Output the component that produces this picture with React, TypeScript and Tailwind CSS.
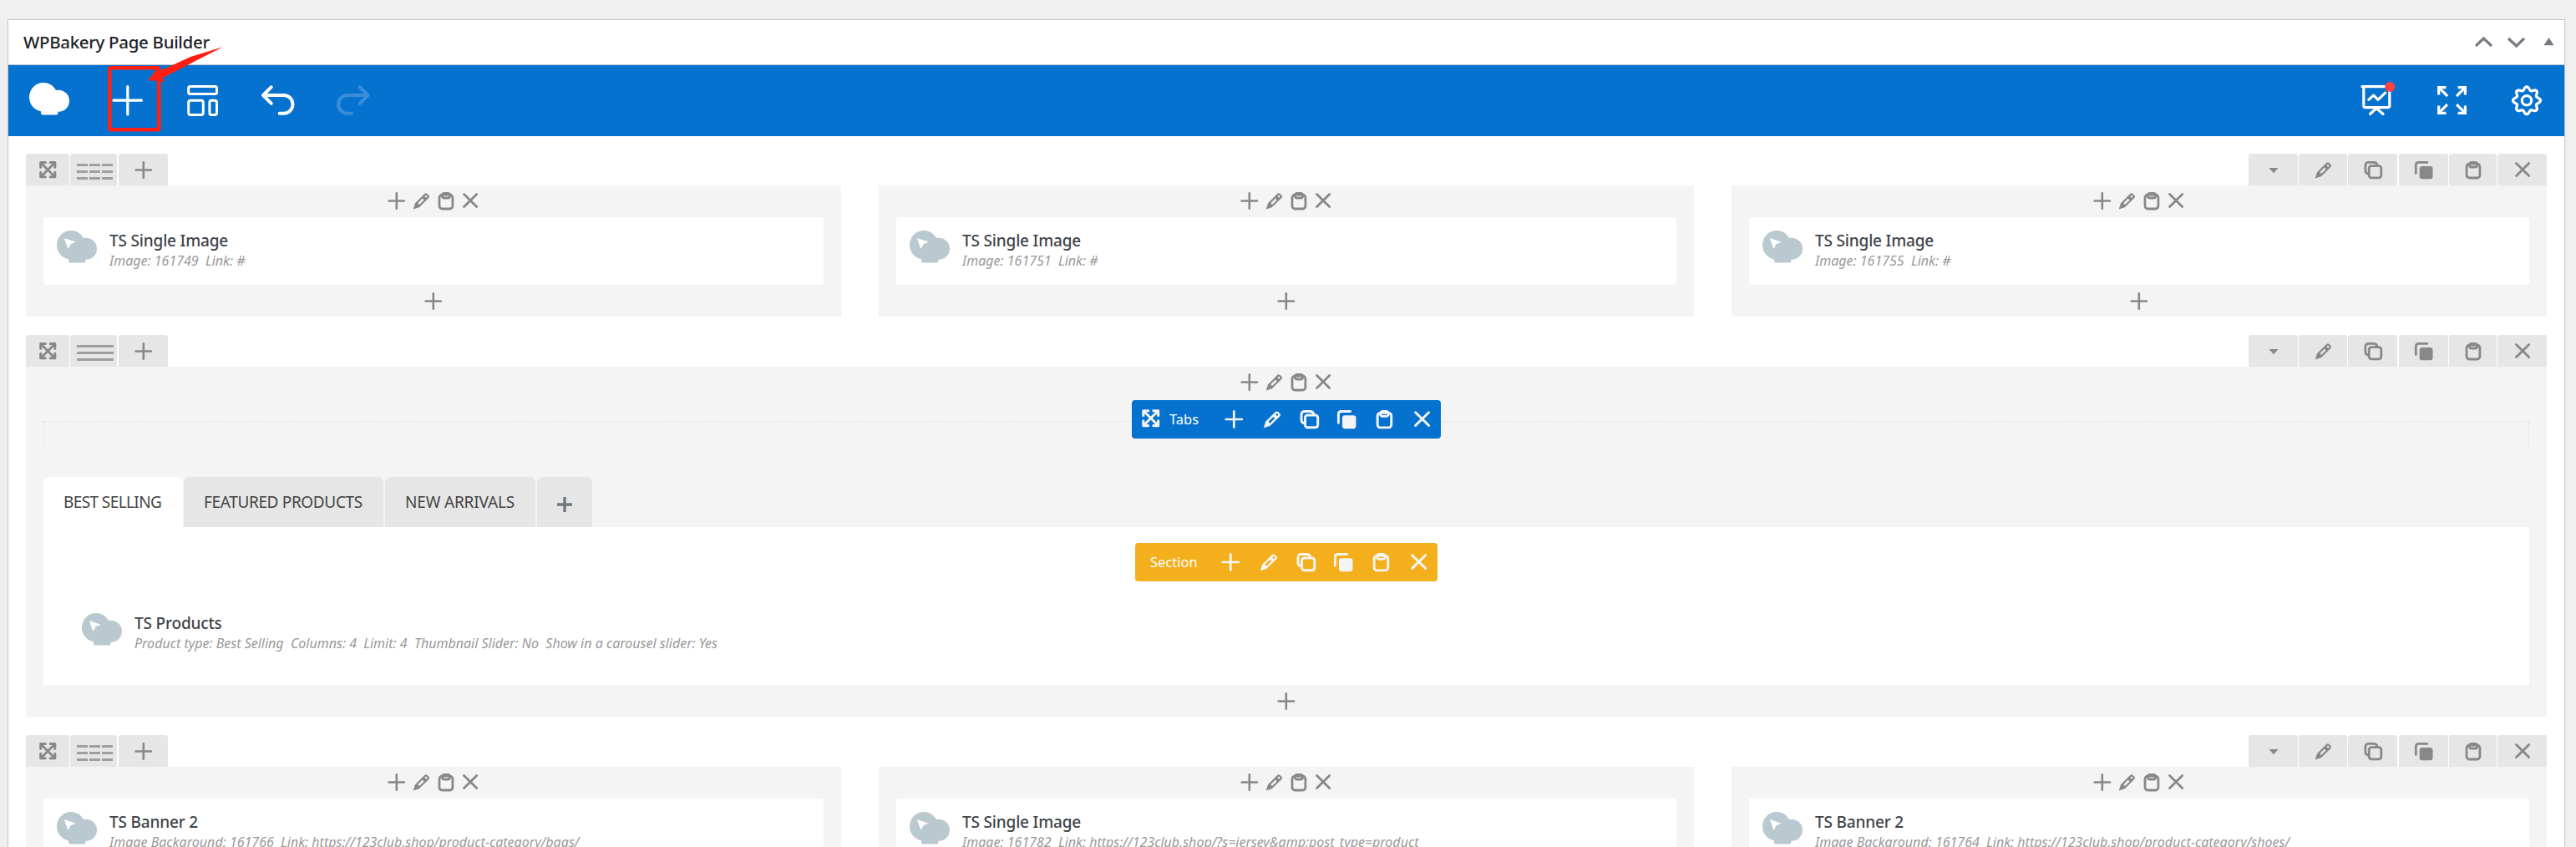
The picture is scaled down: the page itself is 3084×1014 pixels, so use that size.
import { type ReactNode } from 'react'
import clsx from 'clsx'

type IconName = 'move' | 'add' | 'edit' | 'copy' | 'clone' | 'paste' | 'remove' | 'toggle'

interface ElementProps {
  name: string
  params: string
}

interface ColumnsRowProps {
  elements: ElementProps[]
}

const icons: Record<IconName, ReactNode> = {
  move: (
    <g strokeWidth="3" strokeLinejoin="round">
      <path d="M3.7 8.2V2.6h5.6M15.2 2.6h5.6v5.6M3.7 14.2v5.6h5.6M15.2 19.8h5.6v-5.6" />
      <path d="M4.5 3.4l15.5 15.6M20 3.4L4.5 19" strokeWidth="2.8" />
    </g>
  ),
  add: <path d="M11.8 2.3v18.4M2.6 11.5h18.4" strokeWidth="2.6" />,
  edit: (
    <path
      d="M2.7 21.4L5 14.2 16.2 3Q17.8 1.6 19.6 3L21.3 4.7Q22.9 6.4 21.3 8.1L9.8 19.2ZM8.3 14.2L10 16 15.6 10.4 13.8 8.6ZM16.5 6.1L18.2 7.8 19.7 6.3 18 4.6Z"
      fill="currentColor"
      fillRule="evenodd"
      stroke="none"
    />
  ),
  copy: (
    <g strokeWidth="2.8">
      <rect x="7.2" y="6.7" width="14.6" height="14.2" rx="2.8" />
      <path d="M5.6 16Q2.9 15.2 2.9 12.3V6.2Q2.9 2.4 6.7 2.4H13Q16 2.4 16.8 5" />
    </g>
  ),
  clone: (
    <g strokeWidth="2.8">
      <rect x="6.7" y="7" width="15.8" height="15.3" rx="3" fill="currentColor" stroke="none" />
      <path d="M2.3 15.6V5.6Q2.3 2.4 5.5 2.4H15.9" />
    </g>
  ),
  paste: (
    <g strokeWidth="2.8">
      <rect x="4" y="4.2" width="15.9" height="16.8" rx="3.2" />
      <rect x="7.2" y="2.4" width="9.4" height="5.6" rx="2.6" />
    </g>
  ),
  remove: <path d="M4.5 3.6l15.2 15M19.7 3.6l-15.2 15" strokeWidth="2.8" />,
  toggle: <path d="M6.4 9h11.2L12 15.2z" fill="currentColor" stroke="none" />
}

function Icon ({ name, size = 24 }: { name: IconName, size?: number }) {
  return (
    <svg
      className="shrink-0"
      width={size}
      height={size}
      viewBox="0 0 24 24"
      fill="none"
      stroke="currentColor"
      strokeLinecap="round"
    >
      {icons[name]}
    </svg>
  )
}

function BunIcon ({ cursor = false }: { cursor?: boolean }) {
  return (
    <svg className="shrink-0" width="48" height="39" viewBox="0 0 48 39" fill="currentColor">
      <ellipse cx="17" cy="17.3" rx="17" ry="17.3" />
      <circle cx="35" cy="21.8" r="13" />
      <path d="M14 30h20.4v6.6q0 2-2 2h-16.4q-2 0-2-2z" />
      {cursor && <path d="M9.6 9.8l12 4-5.4 2-2.6 5.4z" fill="#fff" stroke="#fff" strokeLinejoin="round" />}
    </svg>
  )
}

function NavButton ({ children, className }: { children: ReactNode, className?: string }) {
  return (
    <button className={clsx('h-[85px] w-[90px]', className)}>
      <svg
        width="90"
        height="85"
        viewBox="0 0 90 85"
        fill="none"
        stroke="currentColor"
        strokeWidth="3.2"
        strokeLinecap="round"
        strokeLinejoin="round"
      >
        {children}
      </svg>
    </button>
  )
}

// eight-toothed outline, sampled as a wave around the hub
const gearPoints = Array.from({ length: 96 }, (_, i) => {
  const angle = (i / 96) * Math.PI * 2
  const radius = 14.5 + 2 * Math.cos(8 * angle)
  return `${(45 + radius * Math.sin(angle)).toFixed(2)},${(42.3 - radius * Math.cos(angle)).toFixed(2)}`
}).join(' ')

function Navbar () {
  return (
    <nav className="flex h-[85px] justify-between bg-[#0672cf] text-white">
      <div className="flex">
        <div className="flex w-[98px] items-center justify-center pb-[5px]">
          <BunIcon />
        </div>
        <NavButton>
          <path d="M44.8 25.7v33.2M28 42.2h33.4" />
        </NavButton>
        <NavButton>
          <g strokeWidth="3">
            <rect x="27.7" y="25.5" width="33.8" height="9" rx="2" />
            <rect x="27.7" y="42.3" width="17.6" height="17.2" rx="2.4" />
            <rect x="52.9" y="42.3" width="8.6" height="17.2" rx="2.4" />
          </g>
        </NavButton>
        <NavButton>
          <path d="M36.8 26.2L27 36l9.8 9.8M27 36h24.6a10.9 10.9 0 0 1 0 21.8h-5" strokeWidth="3.9" />
        </NavButton>
        <NavButton className="text-[#3a8ed9]">
          <path d="M52.8 26.2L62.6 36l-9.8 9.8M62.6 36H38a10.9 10.9 0 0 0 0 21.8h5" strokeWidth="3.9" />
        </NavButton>
      </div>
      <div className="flex">
        <NavButton>
          <path d="M28 25.7h34M29.8 26v22.6q0 2 2 2h27q2 0 2-2V26" />
          <path d="M45 51.5l-7.4 7M45 51.5l8 7M35.8 41.4l5.8-5.3 5.4 5.3 8.6-8.2" />
          <circle cx="61.2" cy="26" r="6" fill="#ff4343" stroke="none" />
        </NavButton>
        <NavButton>
          <g strokeLinecap="square" strokeLinejoin="miter">
            <path d="M29.7 34v-7.3h7.2M54.2 26.7h7.2V34M29.7 50v7.4h7.2M54.2 57.4h7.2V50" />
            <path d="M30.5 27.5l8.4 8.4M60.6 27.5l-8.4 8.4M30.5 56.6l8.4-8.4M60.6 56.6l-8.4-8.4" />
          </g>
        </NavButton>
        <NavButton>
          <polygon points={gearPoints} />
          <circle cx="45" cy="42.3" r="5.7" />
        </NavButton>
      </div>
    </nav>
  )
}

function PanelHeader () {
  return (
    <header className="flex h-[54px] items-center justify-between border-b border-[#c3c4c7] pl-[18px] pr-[12px]">
      <h2 className="text-[20.5px] font-medium leading-[53px] tracking-[-0.32px] text-[#1d2327]">WPBakery Page Builder</h2>
      <svg width="98" height="16" viewBox="0 0 98 16" className="mb-px" fill="none" stroke="#787c82" strokeWidth="3.2">
        <path d="M4 13l9.4-9L23 13M43 4l9.6 9 9.4-9" />
        <path d="M85.5 12.3l6-9.3 6 9.3z" fill="#787c82" stroke="none" />
      </svg>
    </header>
  )
}

function ControlTab ({ children, className }: { children: ReactNode, className: string }) {
  return (
    <button className={clsx('flex h-[38px] justify-center rounded-t-[3px] bg-[#e6e6e6] pt-[8px]', className)}>
      {children}
    </button>
  )
}

function LayoutIcon ({ columns }: { columns: number }) {
  return (
    <div className="mt-[4px] flex w-[44px] flex-col gap-[5px]">
      {[0, 1, 2].map((line) => (
        <div key={line} className="flex gap-[2px]">
          {Array.from({ length: columns }, (_, i) => (
            <span key={i} className="h-[3px] flex-1 bg-[#9f9f9f]" />
          ))}
        </div>
      ))}
    </div>
  )
}

function RowControls ({ columns }: { columns: number }) {
  return (
    <div className="flex justify-between text-[#888]">
      <div className="flex">
        <ControlTab className="mr-px w-[52px]"><Icon name="move" /></ControlTab>
        <ControlTab className="mr-[2px] w-[56px] pl-[3px]"><LayoutIcon columns={columns} /></ControlTab>
        <ControlTab className="w-[59px]"><Icon name="add" /></ControlTab>
      </div>
      <div className="flex">
        <ControlTab className="mr-px w-[59px]"><Icon name="toggle" /></ControlTab>
        <ControlTab className="mr-px w-[58px]"><Icon name="edit" /></ControlTab>
        <ControlTab className="mr-[2px] w-[59px]"><Icon name="copy" /></ControlTab>
        <ControlTab className="mr-px w-[59px]"><Icon name="clone" /></ControlTab>
        <ControlTab className="mr-px w-[57px]"><Icon name="paste" /></ControlTab>
        <ControlTab className="w-[59px]"><Icon name="remove" /></ControlTab>
      </div>
    </div>
  )
}

function ColumnControls () {
  return (
    <div className="flex h-[38px] justify-center gap-[5.5px] pt-[7px] text-[#888]">
      <Icon name="add" />
      <Icon name="edit" />
      <Icon name="paste" />
      <Icon name="remove" />
    </div>
  )
}

function AppendButton () {
  return (
    <div className="flex h-[38px] justify-center pt-[8px] text-[#888]">
      <Icon name="add" />
    </div>
  )
}

function ElementCard ({ name, params }: ElementProps) {
  return (
    <div className="flex h-[81px] gap-[15px] rounded-[3px] bg-white pl-[16px] pt-[16px]">
      <div className="text-[#bac9cf]">
        <BunIcon cursor />
      </div>
      <div>
        <h4 className="text-[19px] font-medium leading-[24px] tracking-[-0.17px] text-[#3e444a]">{name}</h4>
        <p className="whitespace-pre text-[16px] italic leading-[24px] text-[#999]">{params}</p>
      </div>
    </div>
  )
}

function ColumnsRow ({ elements }: ColumnsRowProps) {
  return (
    <section>
      <RowControls columns={elements.length} />
      <div className="grid grid-cols-3 gap-[45px]">
        {elements.map((element) => (
          <div key={element.params} className="bg-[#f4f4f4] px-[21px]">
            <ColumnControls />
            <ElementCard {...element} />
            <AppendButton />
          </div>
        ))}
      </div>
    </section>
  )
}

const barActions: IconName[] = ['add', 'edit', 'copy', 'clone', 'paste', 'remove']

function ContainerBar ({ label, className, move = false }: { label: string, className: string, move?: boolean }) {
  return (
    <div className={clsx('flex h-[46px] items-center rounded-[4px] text-[#f4f4f4]', className)}>
      {move && <span className="mb-[1px] mr-[10px]"><Icon name="move" size={25} /></span>}
      <span className="flex-1 text-[16.5px] leading-[46px] text-white">{label}</span>
      {barActions.map((action) => (
        <span key={action} className="flex w-[45px] justify-center">
          <Icon name={action} size={25} />
        </span>
      ))}
    </div>
  )
}

function TabsRow () {
  return (
    <section>
      <RowControls columns={1} />
      <div className="bg-[#f4f4f4] px-[21px]">
        <ColumnControls />
        <div className="relative mt-[27px] h-[34px] border-x border-t border-dotted border-[#dcdcdc]">
          <ContainerBar
            move
            label="Tabs"
            className="absolute left-1/2 top-[-26px] w-[370px] -translate-x-1/2 bg-[#0672cf] pl-[10px]"
          />
        </div>
        <div className="mt-[33px] flex h-[60px] gap-[2px] text-[19px] leading-[60px] text-[#444]">
          <span className="-mr-px w-[167px] rounded-t-[7px] bg-white pl-[24px] tracking-[-0.6px]">BEST SELLING</span>
          <span className="w-[239px] rounded-t-[7px] bg-[#e6e6e6] pl-[24px] tracking-[-0.35px]">FEATURED PRODUCTS</span>
          <span className="w-[180px] rounded-t-[7px] bg-[#e6e6e6] pl-[24px] tracking-[-0.17px]">NEW ARRIVALS</span>
          <span className="flex w-[66px] items-center justify-center rounded-t-[7px] bg-[#e6e6e6] pt-[6px]">
            <svg width="18" height="18" viewBox="0 0 18 18" stroke="#6f787f" strokeWidth="3.4">
              <path d="M9 0v18M0 9h18" />
            </svg>
          </span>
        </div>
        <div className="h-[189px] bg-white px-[30px] pt-[19px]">
          <ContainerBar label="Section" className="mx-auto mb-[22px] w-[362px] bg-[#f4af1d] pl-[18px]" />
          <ElementCard
            name="TS Products"
            params="Product type: Best Selling  Columns: 4  Limit: 4  Thumbnail Slider: No  Show in a carousel slider: Yes"
          />
        </div>
        <AppendButton />
      </div>
    </section>
  )
}

function Annotation () {
  return (
    <svg className="absolute left-[125px] top-[50px]" width="150" height="112" viewBox="125 50 150 112">
      <rect x="131.2" y="81.2" width="59" height="74" rx="1.5" fill="none" stroke="#ff2013" strokeWidth="4.6" />
      <path d="M177.3 96L188 82.3 189 85.5 200 81 228 68 266.8 56.2 232 74 194.5 93.5 197.3 98z" fill="#ff2013" />
    </svg>
  )
}

const images: ElementProps[] = [
  { name: 'TS Single Image', params: 'Image: 161749  Link: #' },
  { name: 'TS Single Image', params: 'Image: 161751  Link: #' },
  { name: 'TS Single Image', params: 'Image: 161755  Link: #' }
]

const banners: ElementProps[] = [
  { name: 'TS Banner 2', params: 'Image Background: 161766  Link: https://123club.shop/product-category/bags/' },
  { name: 'TS Single Image', params: 'Image: 161782  Link: https://123club.shop/?s=jersey&amp;post_type=product' },
  { name: 'TS Banner 2', params: 'Image Background: 161764  Link: https://123club.shop/product-category/shoes/' }
]

export default function App () {
  return (
    <main className="relative h-[1014px] w-[3084px] overflow-hidden bg-[#efefef] pl-[9px] pr-[13px] pt-[23px] font-['Noto_Sans','Open_Sans',sans-serif]">
      <div className="border border-[#c3c4c7] bg-white">
        <PanelHeader />
        <Navbar />
        <div className="flex flex-col gap-[22px] px-[21px] pt-[21px]">
          <ColumnsRow elements={images} />
          <TabsRow />
          <ColumnsRow elements={banners} />
        </div>
      </div>
      <Annotation />
    </main>
  )
}
